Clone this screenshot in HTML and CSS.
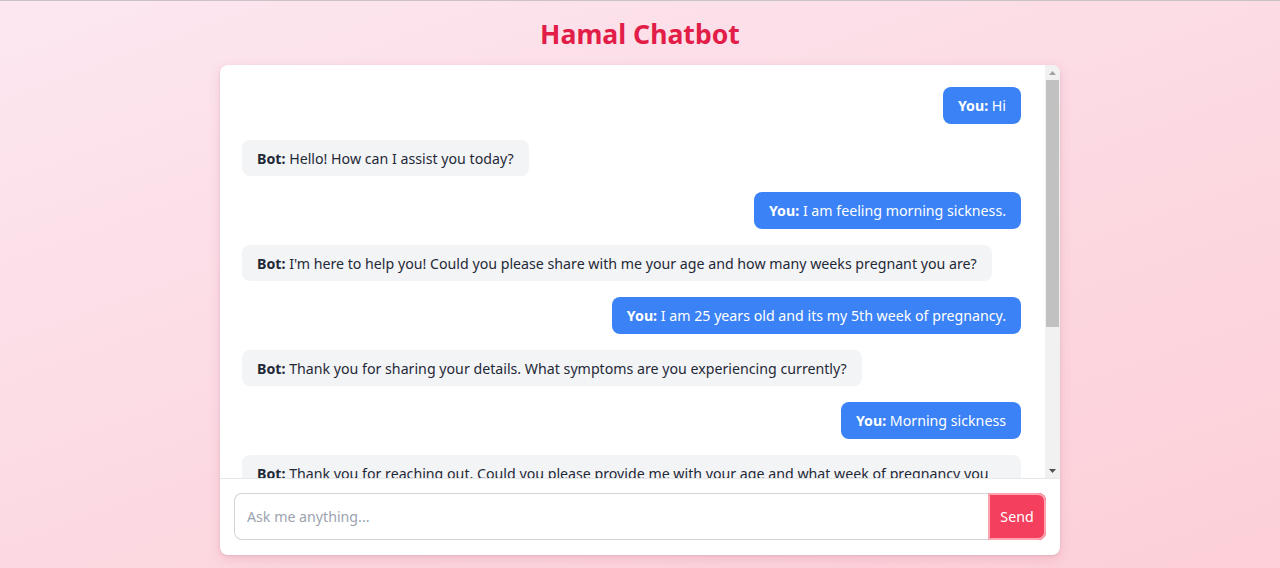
FILE: index.html
```html
<!DOCTYPE html>
<html lang="en">
<head>
<meta charset="utf-8">
<title>Hamal Chatbot</title>
<link rel="stylesheet" href="styles.css">
</head>
<body>
<div class="topline"></div>
<main class="page">
  <h1 class="title">Hamal Chatbot</h1>
  <section class="card">
    <div class="chat">
      <div class="messages">
        <div class="msg user"><b>You:</b> Hi</div>
        <div class="msg bot"><b>Bot:</b> Hello! How can I assist you today?</div>
        <div class="msg user"><b>You:</b> I am feeling morning sickness.</div>
        <div class="msg bot"><b>Bot:</b> I'm here to help you! Could you please share with me your age and how many weeks pregnant you are?</div>
        <div class="msg user"><b>You:</b> I am 25 years old and its my 5th week of pregnancy.</div>
        <div class="msg bot"><b>Bot:</b> Thank you for sharing your details. What symptoms are you experiencing currently?</div>
        <div class="msg user"><b>You:</b> Morning sickness</div>
        <div class="msg bot"><b>Bot:</b> Thank you for reaching out. Could you please provide me with your age and what week of pregnancy you are currently in?</div>
        <div class="msg user"><b>You:</b> I am 25 years old and its my 5th week.</div>
        <div class="msg bot"><b>Bot:</b> Morning sickness is common in early pregnancy. Try eating small, frequent meals and staying hydrated.</div>
        <div class="msg user"><b>You:</b> Thank you</div>
      </div>
      <div class="scrollbar" aria-hidden="true">
        <div class="arrow">
          <svg width="7" height="4" viewBox="0 0 7 4"><path d="M3.5 0L7 4H0z" fill="#a3a3a3"/></svg>
        </div>
        <div class="track"><div class="thumb"></div></div>
        <div class="arrow">
          <svg width="7" height="4" viewBox="0 0 7 4"><path d="M0 0H7L3.5 4z" fill="#505050"/></svg>
        </div>
      </div>
    </div>
    <form class="composer">
      <input class="field" type="text" placeholder="Ask me anything...">
      <button class="send" type="button">Send</button>
    </form>
  </section>
</main>
</body>
</html>
```
FILE: styles.css
```css
* { box-sizing: border-box; }
html, body { height: 100%; }
body {
  margin: 0;
  font-family: "Noto Sans", "Open Sans", sans-serif;
  background: linear-gradient(160deg, #fce7f0 0%, #fcd9e2 55%, #fdcfd8 100%);
  overflow: hidden;
}
.topline { height: 1px; background: #c9c2c6; }
.page {
  display: flex;
  flex-direction: column;
  align-items: center;
}
.title {
  margin: 14px 0 0;
  height: 50px;
  font-size: 26.6px;
  font-weight: 700;
  color: #e11d48;
  line-height: 38px;
}
.card {
  width: 840px;
  height: 490px;
  background: #fff;
  border-radius: 8px;
  box-shadow: 0 4px 12px rgba(190, 80, 110, 0.18), 0 1px 3px rgba(0,0,0,0.08);
  display: flex;
  flex-direction: column;
  overflow: hidden;
}
.chat {
  flex: 1;
  min-height: 0;
  display: flex;
}
.messages {
  flex: 1;
  min-width: 0;
  overflow: hidden;
  padding: 22px 24px 22px 22px;
  display: flex;
  flex-direction: column;
  gap: 16px;
}
.scrollbar {
  width: 15px;
  flex: none;
  display: flex;
  flex-direction: column;
  background: #f1f1f1;
}
.arrow {
  height: 15px;
  display: flex;
  align-items: center;
  justify-content: center;
}
.arrow svg { display: block; }
.track {
  flex: 1;
  padding: 0 1px;
}
.thumb {
  height: 247px;
  background: #c1c1c1;
}
.msg {
  flex: none;
  padding: 9px 15px 7px;
  border-radius: 8px;
  font-size: 14.2px;
  line-height: 20.5px;
  max-width: 100%;
}
.msg b { font-weight: 700; }
.user {
  align-self: flex-end;
  background: #3b82f6;
  color: #fff;
}
.bot {
  align-self: flex-start;
  background: #f3f4f6;
  color: #1f2937;
}
.composer {
  margin: 0;
  border-top: 1px solid #e5e7eb;
  padding: 14px 14px 15px;
  display: flex;
  height: 77px;
}
.field {
  flex: 1;
  height: 47px;
  border: 1px solid #d1d5db;
  border-right: none;
  border-radius: 8px 0 0 8px;
  padding: 0 12px;
  font-family: inherit;
  font-size: 14.2px;
  color: #1f2937;
  outline: none;
}
.field::placeholder { color: #9ca3af; }
.send {
  width: 58px;
  height: 47px;
  border: none;
  border-radius: 0 8px 8px 0;
  background: #f43f5e;
  color: #fff;
  font-family: inherit;
  font-size: 14.2px;
  box-shadow: 0 0 0 2px #fda4af inset, 0 0 0 3px #f43f5e inset;
  cursor: pointer;
}
```
